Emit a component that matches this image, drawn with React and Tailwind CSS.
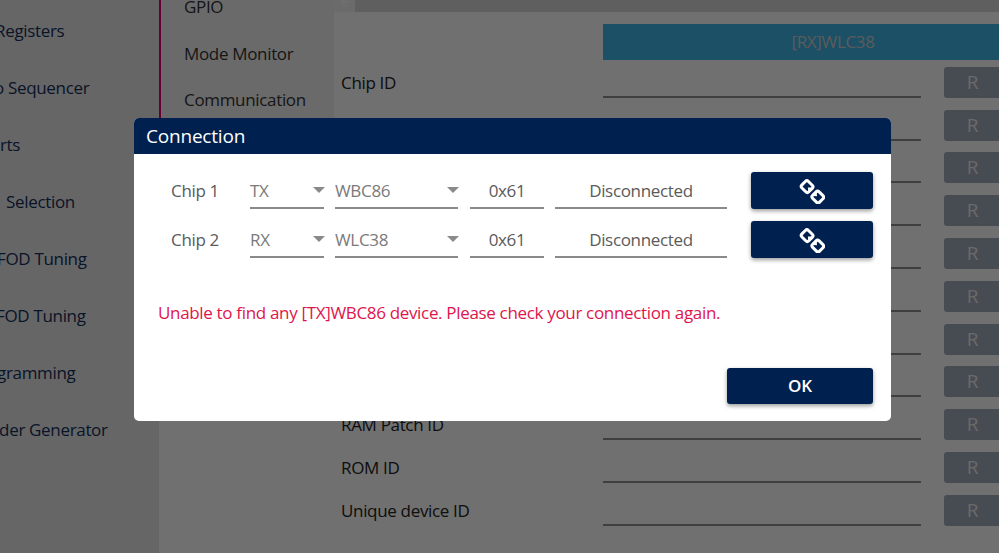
import { ArrowLeft } from "lucide-react";

const font = { fontFamily: '"Open Sans", "Noto Sans", sans-serif' };

const sideItems = [
  { label: "Registers", cls: "ml-[-5px]" },
  { label: "o Sequencer", cls: "ml-[-6px]" },
  { label: "rts", cls: "ml-0" },
  { label: "Selection", cls: "ml-[6px]" },
  { label: "FOD Tuning", cls: "ml-[-3px]" },
  { label: "FOD Tuning", cls: "ml-[-4px]" },
  { label: "gramming", cls: "ml-[-3px]" },
  { label: "nder Generator", cls: "ml-[-11px]" },
];

const subItems = ["GPIO", "Mode Monitor", "Communication"];

// only the labels that show around the dialog
const rows = ["Chip ID", "", "", "", "", "", "", "", "RAM Patch ID", "ROM ID", "Unique device ID"];

const Link = ({ cx, cy, flip }) => (
  <g transform={`translate(${cx} ${cy}) rotate(${flip ? 225 : 45})`}>
    <rect x="-4.9" y="-4.6" width="9.8" height="9.2" rx="2.2" stroke="white" strokeWidth="3" />
    <path d="M4 -2.6v5.2l-2.8-2.6z" fill="white" />
  </g>
);

const LinkIcon = () => (
  <svg width="26" height="26" viewBox="0 0 26 26" fill="none">
    <Link cx={8.1} cy={8.6} />
    <Link cx={18.8} cy={19} flip />
  </svg>
);

const Select = ({ value, className }) => (
  <div className={`flex items-center justify-between h-[37px] border-b-2 border-[#8a8a8a] text-[#7a7a7a] ${className}`}>
    <span className="pt-[1px]">{value}</span>
    <span className="mr-[-1px] w-0 h-0 border-x-[6px] border-x-transparent border-t-[6px] border-t-[#8a8a8a]" />
  </div>
);

const ChipRow = ({ name, role, chip }) => (
  <div className="flex items-start h-[37px] text-[17px] tracking-[-0.33px] leading-[37px]">
    <span className="w-[79px] text-[#5a5a5a]">{name}</span>
    <Select value={role} className="w-[74px]" />
    <Select value={chip} className="w-[123px] ml-[11px]" />
    <div className="w-[74px] ml-[12px] h-[37px] border-b-2 border-[#8a8a8a] text-center text-[#5a5a5a]">0x61</div>
    <div className="w-[172px] ml-[11px] h-[37px] border-b-2 border-[#8a8a8a] text-center text-[#5a5a5a]">Disconnected</div>
    <button className="w-[122px] h-[37px] ml-[24px] flex items-center justify-center rounded-[3px] bg-[#002150] shadow-[0_2px_4px_rgba(0,0,0,0.4)]">
      <LinkIcon />
    </button>
  </div>
);

export default function App() {
  return (
    <div className="relative w-[999px] h-[553px] overflow-hidden bg-white" style={font}>
      {/* page behind the dialog */}
      <div className="flex h-full">
        <div className="w-[159px] shrink-0 h-full bg-[#e8e8e8] overflow-hidden pt-[17px] text-[17px] tracking-[-0.33px] text-[#14305c]">
          {sideItems.map((item, i) => (
            <div key={i} className={`h-[57px] whitespace-nowrap leading-[28px] ${item.cls}`}>
              {item.label}
            </div>
          ))}
        </div>
        <div className="w-[175px] shrink-0 h-[300px] bg-[#f2f2f2] border-l-2 border-[#e6007e] overflow-hidden pl-[23px] text-[17px] tracking-[-0.33px] text-[#333333]">
          <div className="mt-[-7px]">
            {subItems.map((s) => (
              <div key={s} className="h-[46.5px] leading-[28px] whitespace-nowrap">{s}</div>
            ))}
          </div>
        </div>
        <div className="flex-1 min-w-0">
          <div className="flex h-[12px] overflow-hidden">
            <div className="w-[21px] flex justify-center bg-[#f4f4f4] text-white">
              <ArrowLeft size={12} strokeWidth={3} className="mt-[-4px]" />
            </div>
            <div className="flex-1 bg-[#d8d8d8]" />
          </div>
          <div className="w-[460px] h-[36px] mt-[12px] ml-[269px] bg-[#3fb6e8] text-center text-[17px] tracking-[-0.33px] leading-[36px] text-[#cfcfcf]">
            [RX]WLC38
          </div>
          <div className="mt-[-5px] pl-[7px]">
            {rows.map((label, i) => (
              <div key={i} className="flex items-end h-[42.8px]">
                <div className="w-[262px] shrink-0 pb-[1px] text-[17px] tracking-[-0.33px] leading-[28px] text-[#222222]">{label}</div>
                <div className="w-[318px] shrink-0 h-[31px] border-b-2 border-[#909090]" />
                <div className="w-[60px] shrink-0 h-[31px] ml-[23px] rounded-[3px] bg-[#a2aabb] pr-[3px] text-center text-[19px] leading-[31px] text-[#f0f0f0]">
                  R
                </div>
              </div>
            ))}
          </div>
        </div>
      </div>

      {/* dim layer */}
      <div className="absolute inset-0 bg-black/[0.56]" />

      {/* Connection dialog */}
      <div className="absolute left-[134px] top-[118px] w-[757px] h-[303px] rounded-[5px] overflow-hidden bg-white">
        <div className="h-[36px] bg-[#002150] pl-[12px] text-[19px] tracking-[-0.2px] leading-[37px] text-white">Connection</div>
        <div className="pl-[37px] pt-[18px] flex flex-col gap-[12px]">
          <ChipRow name="Chip 1" role="TX" chip="WBC86" />
          <ChipRow name="Chip 2" role="RX" chip="WLC38" />
        </div>
        <div className="pl-[24px] mt-[41px] text-[17px] tracking-[-0.33px] leading-[28px] text-[#e0144c]">
          Unable to find any [TX]WBC86 device. Please check your connection again.
        </div>
        <div className="flex justify-end pr-[18px] mt-[41px]">
          <button className="w-[146px] h-[36px] rounded-[3px] bg-[#002150] text-[17px] font-semibold text-white shadow-[0_2px_4px_rgba(0,0,0,0.4)]">
            OK
          </button>
        </div>
      </div>
    </div>
  );
}
